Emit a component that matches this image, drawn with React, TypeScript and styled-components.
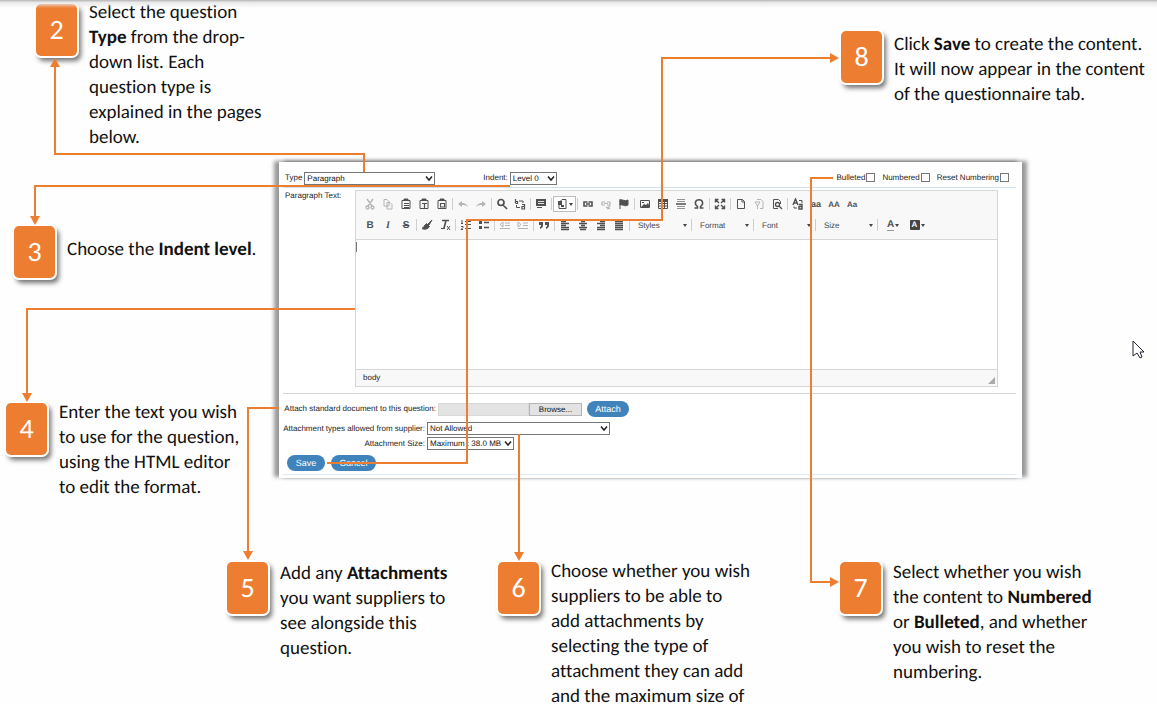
import React from "react";
import styled, { createGlobalStyle } from "styled-components";

const ORANGE = "#ed7d31";

const GlobalStyle = createGlobalStyle`
  * { box-sizing: border-box; }
  body { margin: 0; background: #fefefe; }
  button, input, select, textarea {
    font-family: "Liberation Sans", Arial, sans-serif;
    text-rendering: geometricPrecision;
  }
`;

/* ---------- page ---------- */

const Page = styled.main`
  position: relative;
  height: 100vh;
  min-width: 1100px;
  overflow: hidden;
  font-family: Calibri, Carlito, Lato, sans-serif;
  font-variant-ligatures: none;
  text-rendering: geometricPrecision;
  color: #111;
`;

const TopShade = styled.div`
  position: absolute;
  top: 0;
  left: 0;
  right: 0;
  height: 8px;
  background: linear-gradient(#b4b4b4, #e9e9e9 30%, rgba(254, 254, 254, 0));
`;

const TopRow = styled.section`
  display: flex;
  justify-content: space-between;
  height: 162px;
  padding-left: 36px;
`;

const MiddleRow = styled.section`
  display: grid;
  grid-template-columns: 279px 1fr 135px;
  align-items: start;
`;

const SideNotes = styled.div`
  display: flex;
  flex-direction: column;
  gap: 122px;
  padding-top: 64px;
`;

const BottomRow = styled.section`
  display: grid;
  grid-template-columns: 271px 1fr 317px;
  padding: 59px 0 0 227px;
`;

/* ---------- callouts ---------- */

const CalloutBox = styled.article<{ $top?: number; $left?: number; $width?: number }>`
  display: flex;
  align-items: flex-start;
  gap: 12px;
  padding-top: ${(p) => p.$top ?? 0}px;
  padding-left: ${(p) => p.$left ?? 0}px;
  width: ${(p) => (p.$width ? `${p.$width}px` : "auto")};
`;

const Tile = styled.span<{ $drop: number }>`
  display: flex;
  flex: none;
  align-items: center;
  justify-content: center;
  width: 41px;
  height: 52px;
  margin-top: ${(p) => p.$drop}px;
  border-radius: 5px;
  background: ${ORANGE};
  box-shadow: 0 0 0 2px #fff, 3px 4px 5px 1px rgba(0, 0, 0, 0.55);
  color: #fff;
  font-size: 28px;
  line-height: 28px;
`;

const Note = styled.p<{ $drop: number }>`
  margin: 0;
  padding-top: ${(p) => p.$drop}px;
  font-size: 19px;
  line-height: 25px;
  white-space: nowrap;
`;

type CalloutProps = {
  n: number;
  top?: number;
  left?: number;
  width?: number;
  tileDrop?: number;
  textDrop?: number;
  children: React.ReactNode;
};

const Callout = ({ n, top, left, width, tileDrop = 0, textDrop = 0, children }: CalloutProps) => (
  <CalloutBox $top={top} $left={left} $width={width}>
    <Tile $drop={tileDrop}>{n}</Tile>
    <Note $drop={textDrop}>{children}</Note>
  </CalloutBox>
);

/* ---------- connectors ---------- */

const LeftLines = styled.svg`
  position: absolute;
  top: 0;
  left: 0;
  width: calc(100% - 327px);
  height: 620px;
  overflow: visible;
  pointer-events: none;
`;

const RightLines = styled.svg`
  position: absolute;
  top: 0;
  right: 0;
  width: 347px;
  height: 620px;
  overflow: visible;
  pointer-events: none;
`;

const Connectors = () => (
  <>
    <LeftLines fill="none" stroke={ORANGE} strokeWidth="2" aria-hidden="true">
      <path d="M364 172V154H55V66" />
      <path d="M510 186H35V217" />
      <path d="M355 309H27V394" />
      <path d="M279 408H248V552" />
      <path d="M519 434V553" />
      <path d="M327 463H467V220H662V57" />
      <line x1="662" y1="58" x2="100%" y2="58" />
      <g fill={ORANGE} stroke="none">
        <path d="M55 58l5 9H50z" />
        <path d="M35 225l5-9H30z" />
        <path d="M27 402l5-9H22z" />
        <path d="M248 560l5-9H243z" />
        <path d="M519 561l5-9H514z" />
      </g>
      <svg x="100%" overflow="visible">
        <path d="M9 58l-9-5v10z" fill={ORANGE} stroke="none" />
      </svg>
    </LeftLines>
    <RightLines fill="none" aria-hidden="true">
      <path d="M23 178H1V582H22" stroke={ORANGE} strokeWidth="2" />
      <path d="M29 582l-9-5v10z" fill={ORANGE} />
      <path
        d="M323 341V356L327 353L330 358L332 357L330 352H334z"
        fill="#fff"
        stroke="#223"
        strokeWidth="1"
      />
    </RightLines>
  </>
);

/* ---------- form panel ---------- */

const Panel = styled.form`
  display: flex;
  flex-direction: column;
  padding: 0 6px 3px 4px;
  background: #fff;
  box-shadow: -5px -1px 4px rgba(0, 0, 0, 0.4), 5px -1px 4px rgba(0, 0, 0, 0.4);
  font-family: "Liberation Sans", Arial, sans-serif;
  font-size: 8px;
  line-height: 12px;
  color: #222;
`;

const OptionsBar = styled.div`
  display: flex;
  align-items: center;
  height: 26px;
  padding: 7px 7px 0 2px;
  border-bottom: 1px solid #cfe2f1;
`;

const Field = styled.div<{ $gap?: number; $left?: number }>`
  display: flex;
  align-items: center;
  gap: ${(p) => p.$gap ?? 2}px;
  margin-left: ${(p) => p.$left ?? 0}px;
`;

const Checks = styled.div`
  display: flex;
  gap: 7px;
  margin-left: auto;
`;

const CheckLabel = styled.label`
  display: flex;
  align-items: center;
  gap: 1px;
`;

const Check = styled.input`
  appearance: none;
  width: 9px;
  height: 9px;
  margin: 0 0 2px;
  border: 1px solid #777;
  background: #fff;
`;

const SelectWrap = styled.span<{ $width: number }>`
  position: relative;
  display: block;
  width: ${(p) => p.$width}px;
  height: 13px;

  svg {
    position: absolute;
    top: 3px;
    right: 2px;
    pointer-events: none;
  }
`;

const Select = styled.select`
  display: block;
  appearance: none;
  width: 100%;
  height: 13px;
  margin: 0;
  padding: 0 10px 0 2px;
  border: 1px solid #767676;
  border-radius: 0;
  background: #fff;
  color: #111;
  font-size: 8px;
  line-height: 11px;
`;

const Dropdown = ({ id, width, value }: { id: string; width: number; value: string }) => (
  <SelectWrap $width={width}>
    <Select id={id}>
      <option>{value}</option>
    </Select>
    <svg width="8" height="7" viewBox="0 0 8 7" fill="none" stroke="#222" strokeWidth="1.5">
      <path d="M1 1.5l3 3.5 3-3.5" />
    </svg>
  </SelectWrap>
);

const EditorRow = styled.div`
  display: grid;
  grid-template-columns: 70px 1fr;
  padding: 2px 18px 0 2px;
`;

const Editor = styled.div`
  border: 1px solid #d6d6d6;
`;

const Toolbar = styled.div`
  display: flex;
  flex-direction: column;
  gap: 3px;
  height: 49px;
  padding: 4px 5px 0;
  border-bottom: 1px solid #d6d6d6;
  background: #f8f8f8;
`;

const ToolRow = styled.div`
  display: flex;
  align-items: center;
  height: 18px;
`;

const Tool = styled.button<{ $faded?: boolean; $wide?: boolean; $boxed?: boolean }>`
  display: flex;
  flex: none;
  align-items: center;
  justify-content: center;
  gap: 1px;
  width: ${(p) => (p.$boxed ? 23 : p.$wide ? 24 : 18)}px;
  height: 16px;
  padding: 0;
  border: ${(p) => (p.$boxed ? "1px solid #bcbcbc" : "0")};
  background: ${(p) => (p.$boxed ? "#fff" : "transparent")};
  color: #505050;
  opacity: ${(p) => (p.$faded ? 0.4 : 1)};
`;

const Sep = styled.span`
  flex: none;
  width: 1px;
  height: 12px;
  margin: 0 1px;
  background: #cfcfcf;
`;

const Combo = styled.button`
  display: flex;
  flex: none;
  align-items: center;
  justify-content: space-between;
  width: 59px;
  height: 16px;
  padding: 0 3px 0 7px;
  border: 0;
  background: transparent;
  color: #484848;
  font-size: 8px;
`;

const ColorTools = styled.span`
  display: flex;
  margin-left: 2px;
`;

const EditArea = styled.div`
  position: relative;
  height: 129px;
`;

const TextArea = styled.textarea`
  display: block;
  width: 100%;
  height: 100%;
  padding: 4px;
  border: 0;
  resize: none;
  outline: 0;
  background: #fff;
  font-size: 9px;
`;

const Caret = styled.span`
  position: absolute;
  top: 2px;
  left: 0;
  width: 1px;
  height: 10px;
  background: #777;
`;

const StatusBar = styled.div`
  display: flex;
  align-items: center;
  justify-content: space-between;
  height: 17px;
  padding: 0 2px 0 7px;
  border-top: 1px solid #d6d6d6;
  background: #f8f8f8;

  svg {
    align-self: flex-end;
    margin-bottom: 2px;
  }
`;

const Attachments = styled.div`
  display: flex;
  flex-direction: column;
  gap: 5px;
  margin-top: 6px;
  padding: 7px 0 3px;
  border-top: 1px solid #d4d4d4;
  border-bottom: 1px solid #dcebf5;
`;

const FieldPair = styled.div`
  display: flex;
  flex-direction: column;
  gap: 2px;
`;

const FormLabel = styled.label<{ $width: number }>`
  width: ${(p) => p.$width}px;
  text-align: right;
  white-space: nowrap;
`;

const FileName = styled.input`
  width: 91px;
  height: 13px;
  padding: 0 2px;
  border: 1px solid #d8d8d8;
  background: #e3e3e3;
  font-size: 8px;
`;

const Browse = styled.button`
  width: 53px;
  height: 13px;
  margin-left: -2px;
  padding: 0;
  border: 1px solid #b4b4b4;
  background: #e3e3e3;
  color: #111;
  font-size: 8px;
  line-height: 11px;
`;

const Pill = styled.button<{ $width: number; $left?: number }>`
  width: ${(p) => p.$width}px;
  height: 16px;
  margin-left: ${(p) => p.$left ?? 0}px;
  padding: 0;
  border: 0;
  border-radius: 8px;
  background: #4083ba;
  color: #fff;
  font-size: 9px;
  line-height: 16px;
`;

/* ---------- toolbar icons ---------- */

const Glyph = ({ children, width = 12 }: { children: React.ReactNode; width?: number }) => (
  <svg
    width={width}
    height="12"
    viewBox={`0 0 ${width} 12`}
    fill="none"
    stroke="currentColor"
    strokeWidth="1"
    aria-hidden="true"
  >
    {children}
  </svg>
);

const ArrowDown = () => (
  <svg width="4" height="3" viewBox="0 0 4 3" fill="#444" aria-hidden="true">
    <path d="M0 0h4L2 3z" />
  </svg>
);

const Word = styled.span<{ $size?: number; $italic?: boolean; $strike?: boolean; $under?: boolean }>`
  font-size: ${(p) => p.$size ?? 10}px;
  line-height: 11px;
  font-weight: 700;
  font-style: ${(p) => (p.$italic ? "italic" : "normal")};
  font-family: ${(p) => (p.$italic ? '"Liberation Serif", serif' : "inherit")};
  text-decoration: ${(p) => (p.$strike ? "line-through" : "none")};
  border-bottom: ${(p) => (p.$under ? "1px solid #999" : "0")};
`;

const Inverse = styled.span`
  width: 10px;
  height: 10px;
  border-radius: 1px;
  background: #444;
  color: #fff;
  font-size: 8px;
  font-weight: 700;
  line-height: 10px;
`;

const clipboard = (
  <>
    <path d="M4 2.5H2v8h8v-8H8" />
    <path d="M4 2.5h4v-1.500H4z" fill="currentColor" />
  </>
);

const icons: Record<string, React.ReactNode> = {
  Cut: <path d="M3 1l5 7M9 1L4 8M2 9.500a1.500 1.500 0 1 0 3 0a1.500 1.500 0 1 0-3 0M7 9.500a1.500 1.500 0 1 0 3 0a1.500 1.500 0 1 0-3 0" strokeWidth="1.3" />,
  Copy: <path d="M2 1.500h3l2 2V8H2zM5 4.500h3l2 2v4.500H5z" />,
  Paste: <>{clipboard}<path d="M4 5.500h5M4 7.500h5M4 9.500h5" /></>,
  "Paste as text": <>{clipboard}<path d="M4 5.500h5M6.500 6v4" strokeWidth="1.200" /></>,
  "Paste from Word": <>{clipboard}<path d="M4.500 5.500h4v3.500h-4z" strokeWidth="1.100" /></>,
  Undo: <path d="M1 6l4-3v2c3 0 5 1 6 4c-2-2-3-2-6-2v2z" fill="currentColor" stroke="none" />,
  Redo: <path d="M11 6L7 3v2C4 5 2 6 1 9c2-2 3-2 6-2v2z" fill="currentColor" stroke="none" />,
  Find: <path d="M2 4.500a3 3 0 1 0 6 0a3 3 0 1 0-6 0M7 7l4 4" strokeWidth="1.700" />,
  Replace: <><path d="M1.500 1v4M1.500 3.500h2v2h-2M8 6.500h2.500V11H8V8.500h2.500" strokeWidth="1.200" /><path d="M5 3h4v2M2.500 7v2.500H6" /></>,
  "Select all": <><path d="M1 1h10v7H1z" fill="currentColor" stroke="none" /><path d="M3 3.500h6M3 5.500h6" stroke="#ddd" /><path d="M2 9.500h5" /></>,
  Spelling: <><path d="M3 4.500l3-3h4v9H3z" /><path d="M2 3h4v4H2zM5 7h3v2H5z" fill="currentColor" stroke="none" /></>,
  Link: <path d="M5.500 4H2v4h3.500M6.500 4H10v4H6.500M4 6h4" strokeWidth="1.600" />,
  Unlink: <path d="M5 4H2v3h3M7 4h3v3H7M4 5.500h4M6 9l4 2M10 8l-3 3" strokeWidth="1.200" />,
  Anchor: <path d="M2 1v10M2 2c3-1 4 2 8 0v5c-4 2-5-1-8 0z" fill="currentColor" />,
  Image: <><path d="M1.500 2.500h9v7h-9z" /><path d="M2 9l3-3 2 1 2-2 1 2v2zM3 4h2v1H3z" fill="currentColor" stroke="none" /></>,
  Table: <><path d="M1.500 2v8.500h9V2M1.500 5.500h9M1.500 8h9M4.500 3v7.500M7.500 3v7.500" /><path d="M1 1h10v3H1z" fill="currentColor" stroke="none" /></>,
  "Horizontal line": <><path d="M2 1.500h8M2 3.500h8M2 8.500h8M2 10.500h8" opacity=".6" /><path d="M1 6h10" strokeWidth="1.500" /></>,
  Symbol: <path d="M1.500 10H4.500V8.500C1 6 2 1.800 6 1.800S11 6 7.500 8.500V10h3" strokeWidth="1.500" />,
  Maximize: <path d="M2 2l3 3M10 2L7 5M2 10l3-3M10 10L7 7M1.500 4.500v-3h3M7.500 1.500h3v3M1.500 7.500v3h3M7.500 10.500h3v-3" strokeWidth="1.400" />,
  "New page": <path d="M2.500 1.500h5l2 2v7h-7zM7 1.500v2.500h2.500" />,
  Templates: <path d="M4 1.500h4l2 2v7H7M2 4h5M2 4l2.500 4L7 4M4.500 7v4" />,
  Preview: <><path d="M7 10.500H2.500v-9h5l2 2V6" /><path d="M4.500 6.500a2 2 0 1 0 4 0a2 2 0 1 0-4 0M8 8l3 3" strokeWidth="1.300" /></>,
  Brush: <path d="M11 1L7 5l1 1zM5.500 4.500l3 3C7 10 4 11 1 9.500c1.500-.5 2-3 4.500-5z" fill="currentColor" />,
  "Numbered list": <path d="M2 1v3M1 4.500h2M1 7.500h2v1L1 10.500h2M5 2.500h6M5 5.500h6M5 9.500h6" />,
  "Bulleted list": <><path d="M1 2h3v3H1zM1 7h3v3H1z" fill="currentColor" stroke="none" /><path d="M6 3.500h5M6 8.500h5" strokeWidth="1.600" /></>,
  Outdent: <path d="M1 1.500h10M6 4h5M6 6.500h5M1 9.500h10M4 3v5L1 5.500z" />,
  Indent: <path d="M1 1.500h10M6 4h5M6 6.500h5M1 9.500h10M1 3v5l3-2.500z" />,
  Quote: <path d="M1 3h4v3c0 2-1 3-3 4V8c1 0 1-1 1-2H1zM7 3h4v3c0 2-1 3-3 4V8c1 0 1-1 1-2H7z" fill="currentColor" stroke="none" />,
  "Align left": <path d="M2 2.500h5M2 4.500h8M2 6.500h5M2 8.500h8M2 10.500h8" strokeWidth="1.300" />,
  "Align center": <path d="M4 2.500h4M2 4.500h8M4 6.500h4M2 8.500h8M3 10.500h6" strokeWidth="1.300" />,
  "Align right": <path d="M5 2.500h5M2 4.500h8M5 6.500h5M2 8.500h8M2 10.500h8" strokeWidth="1.300" />,
  Justify: <path d="M2 2.500h8M2 4.500h8M2 6.500h8M2 8.500h8M2 10.500h8" strokeWidth="1.300" />,
};

const Icon = ({ name, faded }: { name: string; faded?: boolean }) => (
  <Tool type="button" aria-label={name} $faded={faded}>
    <Glyph>{icons[name]}</Glyph>
  </Tool>
);

const FirstTools = () => (
  <ToolRow>
    <Icon name="Cut" faded />
    <Icon name="Copy" faded />
    <Icon name="Paste" />
    <Icon name="Paste as text" />
    <Icon name="Paste from Word" />
    <Sep />
    <Icon name="Undo" faded />
    <Icon name="Redo" faded />
    <Sep />
    <Icon name="Find" />
    <Icon name="Replace" />
    <Sep />
    <Icon name="Select all" />
    <Sep />
    <Tool type="button" aria-label="Spelling" $boxed>
      <Glyph>{icons.Spelling}</Glyph>
      <ArrowDown />
    </Tool>
    <Sep />
    <Icon name="Link" />
    <Icon name="Unlink" faded />
    <Icon name="Anchor" />
    <Sep />
    <Icon name="Image" />
    <Icon name="Table" />
    <Icon name="Horizontal line" />
    <Icon name="Symbol" />
    <Sep />
    <Icon name="Maximize" />
    <Sep />
    <Icon name="New page" />
    <Icon name="Templates" faded />
    <Icon name="Preview" />
    <Sep />
    <Tool type="button" aria-label="Switch case">
      <Glyph>
        <path d="M1 7l2.500-6L6 7M2 5h3M7 6.500h3V11H7V8.500h3" strokeWidth="1.400" />
        <path d="M7 2.500h3V5M2 8.500v1.500h3" />
      </Glyph>
    </Tool>
    <Tool type="button"><Word $size={9}>aa</Word></Tool>
    <Tool type="button"><Word $size={8}>AA</Word></Tool>
    <Tool type="button"><Word $size={8}>Aa</Word></Tool>
  </ToolRow>
);

const SecondTools = () => (
  <ToolRow>
    <Tool type="button"><Word>B</Word></Tool>
    <Tool type="button"><Word $italic>I</Word></Tool>
    <Tool type="button"><Word $strike>S</Word></Tool>
    <Sep />
    <Icon name="Brush" />
    <Tool type="button" aria-label="Remove format">
      <Glyph>
        <path d="M3 1.500h7M7 1.500L5 9" strokeWidth="1.600" />
        <path d="M2 9.500h4M8 7l3 4M11 7l-3 4" />
      </Glyph>
    </Tool>
    <Sep />
    <Icon name="Numbered list" />
    <Icon name="Bulleted list" />
    <Sep />
    <Icon name="Outdent" faded />
    <Icon name="Indent" faded />
    <Sep />
    <Icon name="Quote" />
    <Sep />
    <Icon name="Align left" />
    <Icon name="Align center" />
    <Icon name="Align right" />
    <Icon name="Justify" />
    <Sep />
    {["Styles", "Format", "Font", "Size"].map((name) => (
      <React.Fragment key={name}>
        <Combo type="button">
          {name}
          <ArrowDown />
        </Combo>
        <Sep />
      </React.Fragment>
    ))}
    <ColorTools>
      <Tool type="button" $wide>
        <Word $under>A</Word>
        <ArrowDown />
      </Tool>
      <Tool type="button" $wide>
        <Inverse>A</Inverse>
        <ArrowDown />
      </Tool>
    </ColorTools>
  </ToolRow>
);

const QuestionForm = () => (
  <Panel onSubmit={(e) => e.preventDefault()}>
    <OptionsBar>
      <Field>
        <label htmlFor="type">Type</label>
        <Dropdown id="type" width={131} value="Paragraph" />
      </Field>
      <Field $left={48}>
        <label htmlFor="indent">Indent:</label>
        <Dropdown id="indent" width={47} value="Level 0" />
      </Field>
      <Checks>
        {["Bulleted", "Numbered", "Reset Numbering"].map((name) => (
          <CheckLabel key={name}>
            {name}
            <Check type="checkbox" />
          </CheckLabel>
        ))}
      </Checks>
    </OptionsBar>

    <EditorRow>
      <label htmlFor="text">Paragraph Text:</label>
      <Editor>
        <Toolbar>
          <FirstTools />
          <SecondTools />
        </Toolbar>
        <EditArea>
          <TextArea id="text" />
          <Caret />
        </EditArea>
        <StatusBar>
          body
          <svg width="7" height="7" viewBox="0 0 7 7" fill="#aaa" aria-hidden="true">
            <path d="M7 0v7H0z" />
          </svg>
        </StatusBar>
      </Editor>
    </EditorRow>

    <Attachments>
      <Field>
        <FormLabel htmlFor="file" $width={153}>Attach standard document to this question:</FormLabel>
        <FileName id="file" readOnly />
        <Browse type="button">Browse...</Browse>
        <Pill type="button" $width={42} $left={3}>Attach</Pill>
      </Field>
      <FieldPair>
        <Field>
          <FormLabel htmlFor="kinds" $width={142}>Attachment types allowed from supplier:</FormLabel>
          <Dropdown id="kinds" width={183} value="Not Allowed" />
        </Field>
        <Field>
          <FormLabel htmlFor="size" $width={142}>Attachment Size:</FormLabel>
          <Dropdown id="size" width={87} value="Maximum : 38.0 MB" />
        </Field>
      </FieldPair>
      <Field $left={4} $gap={6}>
        <Pill type="submit" $width={38}>Save</Pill>
        <Pill type="button" $width={45}>Cancel</Pill>
      </Field>
    </Attachments>
  </Panel>
);

export default function App() {
  return (
    <>
      <GlobalStyle />
      <Page>
        <TopShade />
        <TopRow>
          <Callout n={2} tileDrop={4}>
            Select the question<br />
            <b>Type</b> from the drop-<br />
            down list. Each<br />
            question type is<br />
            explained in the pages<br />
            below.
          </Callout>
          <Callout n={8} top={31} width={316} textDrop={1}>
            Click <b>Save</b> to create the content.<br />
            It will now appear in the content<br />
            of the questionnaire tab.
          </Callout>
        </TopRow>
        <MiddleRow>
          <SideNotes>
            <Callout n={3} left={14} textDrop={11}>
              Choose the <b>Indent level</b>.
            </Callout>
            <Callout n={4} left={6} tileDrop={3}>
              Enter the text you wish<br />
              to use for the question,<br />
              using the HTML editor<br />
              to edit the format.
            </Callout>
          </SideNotes>
          <QuestionForm />
        </MiddleRow>
        <BottomRow>
          <Callout n={5} tileDrop={3} textDrop={2}>
            Add any <b>Attachments</b><br />
            you want suppliers to<br />
            see alongside this<br />
            question.
          </Callout>
          <Callout n={6} tileDrop={3}>
            Choose whether you wish<br />
            suppliers to be able to<br />
            add attachments by<br />
            selecting the type of<br />
            attachment they can add<br />
            and the maximum size of
          </Callout>
          <Callout n={7} tileDrop={3} textDrop={1}>
            Select whether you wish<br />
            the content to <b>Numbered</b><br />
            or <b>Bulleted</b>, and whether<br />
            you wish to reset the<br />
            numbering.
          </Callout>
        </BottomRow>
        <Connectors />
      </Page>
    </>
  );
}
